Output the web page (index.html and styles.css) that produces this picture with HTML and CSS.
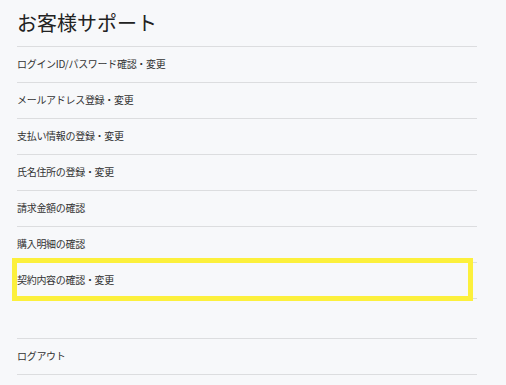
FILE: index.html
```html
<!DOCTYPE html>
<html lang="ja">
<head>
<meta charset="utf-8">
<link rel="stylesheet" href="styles.css">
</head>
<body>
<div class="page">
  <h1 class="title">お客様サポート</h1>
  <ul class="menu">
    <li class="item">ログインID/パスワード確認・変更</li>
    <li class="item">メールアドレス登録・変更</li>
    <li class="item">支払い情報の登録・変更</li>
    <li class="item">氏名住所の登録・変更</li>
    <li class="item">請求金額の確認</li>
    <li class="item">購入明細の確認</li>
    <li class="item highlighted">契約内容の確認・変更<span class="marker"></span></li>
  </ul>
  <ul class="menu logout">
    <li class="item">ログアウト</li>
  </ul>
</div>
</body>
</html>
```
FILE: styles.css
```css
html, body {
  margin: 0;
  padding: 0;
  background: #f7f8fa;
}
body {
  font-family: "Noto Sans CJK JP", "Noto Sans", sans-serif;
  color: #333;
}
.page {
  width: 460px;
  padding-left: 17px;
}
.title {
  margin: 0;
  height: 47px;
  box-sizing: border-box;
  padding-top: 8px;
  font-size: 20px;
  line-height: 30px;
  font-weight: 400;
  color: #222;
  border-bottom: 1px solid #dcdddf;
}
.menu {
  list-style: none;
  margin: 0;
  padding: 0;
}
.item {
  position: relative;
  height: 35px;
  line-height: 33px;
  font-size: 10px;
  letter-spacing: -0.3px;
  border-bottom: 1px solid #dcdddf;
}
.logout {
  margin-top: 39px;
  border-top: 1px solid #dcdddf;
}
.marker {
  position: absolute;
  left: -5px;
  top: -5px;
  width: 461px;
  height: 43px;
  box-sizing: border-box;
  border: 5px solid #fcf03c;
}
```
